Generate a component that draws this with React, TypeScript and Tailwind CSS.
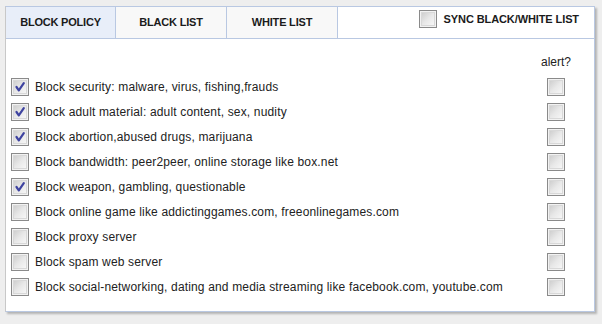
import React from 'react';

const RULES = [
  { label: 'Block security: malware, virus, fishing,frauds', on: true },
  { label: 'Block adult material: adult content, sex, nudity', on: true },
  { label: 'Block abortion,abused drugs, marijuana', on: true },
  { label: 'Block bandwidth: peer2peer, online storage like box.net', on: false },
  { label: 'Block weapon, gambling, questionable', on: true },
  { label: 'Block online game like addictinggames.com, freeonlinegames.com', on: false },
  { label: 'Block proxy server', on: false },
  { label: 'Block spam web server', on: false },
  { label: 'Block social-networking, dating and media streaming like facebook.com, youtube.com', on: false },
];

function Box({ checked = false }: { checked?: boolean }) {
  return (
    <div className="w-[18px] h-[18px] border border-[#8a8a8a] bg-[#f2f2f2] p-[1px] shrink-0">
      <div className="w-full h-full border border-[#d8d8d8] bg-gradient-to-br from-[#cfcfcf] via-[#e8e8e8] to-[#f6f6f6] flex items-center justify-center">
        {checked && (
          <svg width="12" height="12" viewBox="0 0 12 12">
            <path d="M2.5 6 L4.8 9.3 L9.8 2.2" fill="none" stroke="#3e43a0" strokeWidth="2.2" strokeLinecap="round" strokeLinejoin="round" />
          </svg>
        )}
      </div>
    </div>
  );
}

export default function App() {
  return (
    <div className="w-[602px] h-[324px] bg-[#eeeeee] pt-[6px] pl-[5px] font-['Liberation_Sans',Arial,sans-serif]">
      <div className="w-[590px] h-[306px] bg-white border border-[#b9c8e2] border-l-[#c8c8c8] shadow-[2px_2px_2px_rgba(0,0,0,0.25)] flex flex-col">
        {/* tabs */}
        <div className="h-[32px] flex border-b border-[#b9c8e2] shrink-0">
          <div className="w-[110px] bg-[#e8eef9] border-r border-[#b9c8e2] flex items-center justify-center text-[11px] font-bold text-[#1b1b1b] tracking-[-0.2px]">BLOCK POLICY</div>
          <div className="w-[111px] bg-[#f8f8f8] border-r border-[#b9c8e2] flex items-center justify-center text-[11px] font-bold text-[#1b1b1b] tracking-[-0.2px]">BLACK LIST</div>
          <div className="w-[111px] bg-[#f8f8f8] border-r border-[#b9c8e2] flex items-center justify-center text-[11px] font-bold text-[#1b1b1b] tracking-[-0.2px]">WHITE LIST</div>
          <div className="flex-1 flex items-start justify-end pt-[3px] pr-[15px] gap-[7px]">
            <Box />
            <span className="text-[11px] font-bold text-[#1b1b1b] leading-[18px] tracking-[-0.1px]">SYNC BLACK/WHITE LIST</span>
          </div>
        </div>
        {/* body */}
        <div className="flex flex-col pl-[5px] pr-[24px] pt-[16px]">
          <div className="flex justify-end text-[12px] text-[#222] leading-[14px] mr-[-1px] mb-[5px]">alert?</div>
          {RULES.map((r, i) => (
            <div key={i} className="h-[25px] flex items-center">
              <Box checked={r.on} />
              <span className="ml-[6px] flex-1 text-[12px] text-[#222] tracking-[0.16px]">{r.label}</span>
              <div className="mr-[5px]"><Box /></div>
            </div>
          ))}
        </div>
      </div>
    </div>
  );
}
